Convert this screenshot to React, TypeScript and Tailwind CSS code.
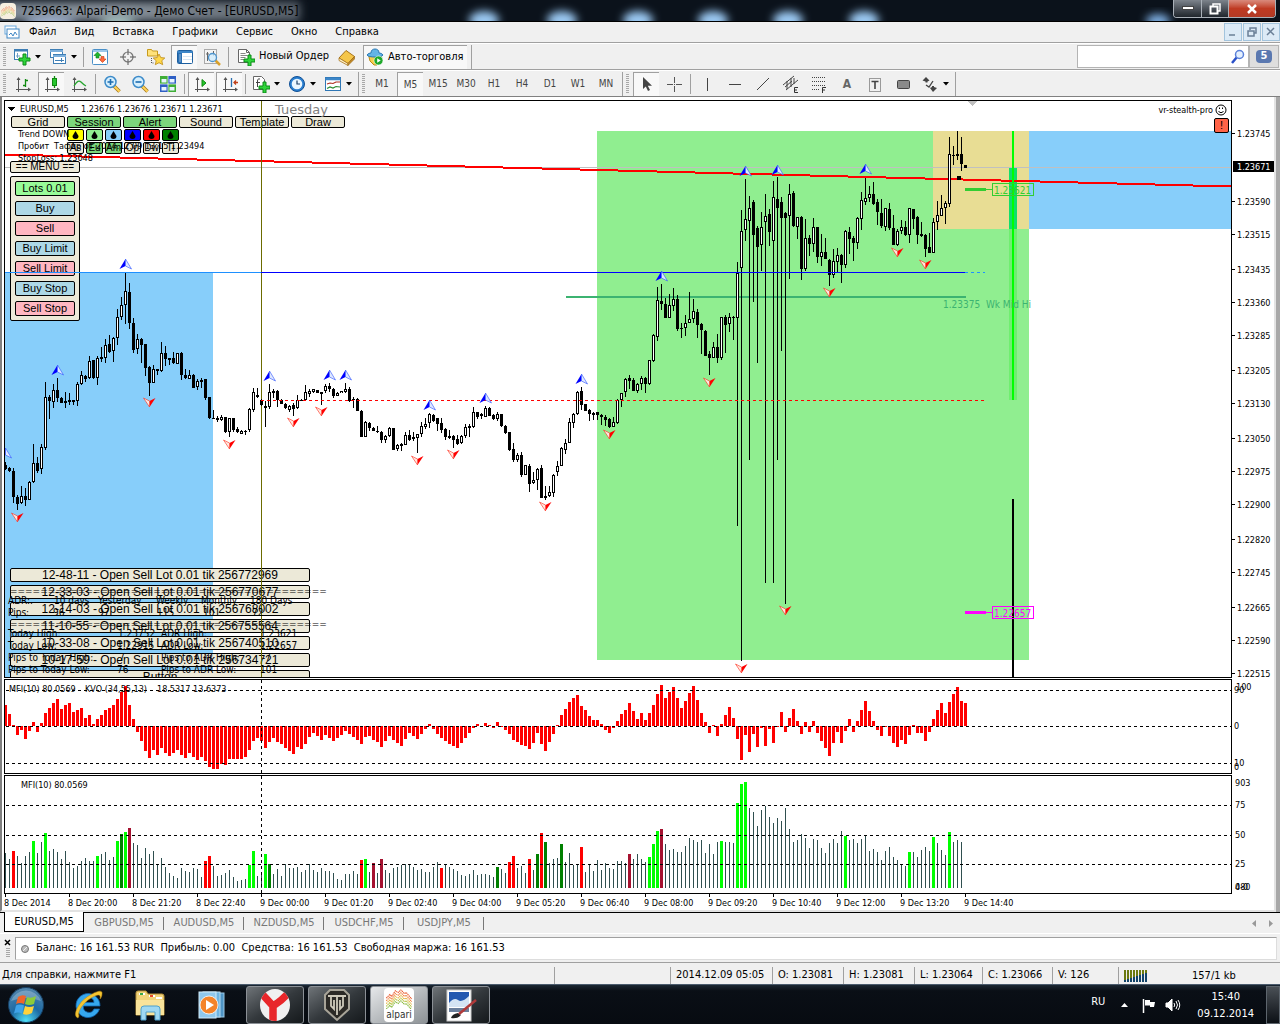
import type { ReactNode } from "react";
import { clsx } from "clsx";

const STEP = 4;
const ORIGIN = 5;
const barX = (i: number) => ORIGIN + i * STEP;

// high, body top, body bottom, low, w = hollow / b = filled
const CANDLES = `462,465,469,470,b 467,468,471,472,b 468,471,497,503,b 495,497,504,510,b 486,496,503,504,w 488,496,500,506,b
481,482,500,500,w 444,463,482,483,w 457,463,471,473,b 444,447,469,474,w 382,397,448,450,w 395,397,401,419,b
384,390,402,408,w 378,390,398,402,b 397,398,403,403,b 392,401,403,408,b 393,400,402,405,b 400,400,402,405,b
382,384,401,406,w 371,375,384,385,w 375,376,379,382,b 356,361,378,379,w 360,360,378,379,b 356,358,378,385,w
347,357,359,362,b 339,345,358,363,w 335,344,352,353,b 337,338,351,362,w 309,317,338,345,w 297,305,317,320,w
273,291,305,324,w 283,292,323,329,b 318,323,350,353,b 334,339,349,354,w 338,339,345,363,b 344,344,368,376,b
366,367,383,396,b 365,369,383,383,w 369,369,371,375,b 342,353,371,372,w 346,353,359,366,b 358,358,360,365,b
352,358,363,364,b 353,353,364,364,w 352,353,375,380,b 369,375,378,379,b 370,375,379,379,w 374,375,388,388,b
379,381,387,390,w 378,380,382,388,b 379,379,398,400,b 397,397,418,419,b 410,418,419,419,b 416,418,420,422,b
415,417,420,421,w 417,417,432,433,b 418,418,432,437,w 418,418,430,432,b 427,429,432,433,b 430,431,434,434,w
430,431,432,435,b 408,409,430,432,w 388,392,410,412,w 388,395,397,398,b 399,400,405,406,b 401,406,408,427,b
384,392,407,409,w 389,391,393,398,b 390,391,400,407,b 399,400,404,404,b 403,404,408,409,b 405,406,410,412,w
403,405,409,416,b 395,400,408,409,w 399,400,401,401,b 385,392,400,401,w 389,391,394,397,w 389,389,392,393,w
390,390,393,393,b 392,392,394,405,b 384,386,391,393,w 383,386,389,392,b 388,389,396,398,b 392,393,396,396,w
391,391,393,393,w 383,389,392,393,w 387,389,401,402,b 397,399,400,408,b 398,399,411,411,b 410,411,437,437,b
421,422,437,437,w 422,423,428,431,b 427,428,431,431,b 426,431,432,433,b 431,432,440,443,b 435,436,440,443,w
427,428,436,437,w 428,428,450,450,b 444,445,449,451,w 443,444,446,451,b 432,435,445,445,w 430,435,440,441,b
432,437,439,441,b 434,434,438,453,w 422,426,434,437,w 418,424,427,429,w 413,414,423,428,w 414,415,421,422,b
418,418,424,431,b 418,423,430,433,b 428,429,437,440,b 430,436,438,439,b 435,436,440,448,b 435,439,444,445,b
435,436,443,444,w 424,427,436,438,w 424,426,428,437,b 407,412,427,428,w 412,412,417,419,b 413,414,416,419,b
406,408,417,417,w 407,408,416,416,b 414,415,419,420,b 412,414,419,421,w 414,414,426,427,b 425,426,433,434,b
432,432,450,451,b 443,449,460,462,b 453,455,460,462,w 452,455,475,477,b 465,465,475,475,w 464,466,484,492,b
472,480,483,484,w 468,469,480,490,w 465,468,498,498,b 486,496,498,500,b 486,492,496,497,w 474,475,493,497,w
461,466,472,476,w 447,448,466,466,w 439,443,450,454,w 418,422,443,443,w 413,414,423,428,w 391,392,414,415,w
387,391,405,410,b 404,404,411,411,b 409,410,414,421,b 412,413,415,420,b 412,412,415,420,b 414,415,417,425,b
415,417,420,426,b 418,419,427,428,b 417,422,427,427,w 399,400,423,424,w 393,393,400,407,w 378,379,392,397,w
375,378,381,389,b 378,380,391,391,b 383,384,391,393,w 376,378,384,390,w 377,378,384,393,b 360,360,384,385,w
334,335,361,362,w 287,300,337,341,w 284,301,304,310,b 298,304,318,318,b 294,305,318,318,w 288,299,306,311,w
295,299,329,331,b 323,328,329,338,b 315,323,328,336,w 292,319,323,323,w 299,311,319,323,w 309,312,325,338,b
323,324,330,354,b 330,331,356,356,b 351,354,358,375,b 342,347,358,358,w 334,347,358,363,b 317,317,358,360,w
315,317,325,353,b 313,317,324,332,w 316,317,318,340,b 262,273,318,526,w 210,231,268,661,w 179,219,230,241,w
196,208,221,460,w 200,202,235,302,b 226,228,247,363,b 212,227,245,271,w 194,216,222,583,w 209,214,232,246,b
181,197,241,583,w 177,199,208,460,b 197,202,218,351,b 212,213,218,604,b 184,194,216,279,w 191,193,226,227,b
217,217,227,239,w 216,217,269,280,b 219,238,269,271,w 235,238,244,256,b 218,227,244,252,w 227,227,257,263,b
234,252,257,266,w 238,252,259,259,b 259,260,275,286,b 249,261,275,278,w 248,255,262,272,w 254,255,265,283,b
230,231,265,268,w 227,232,239,254,b 236,238,243,261,b 217,218,243,249,w 192,200,219,230,w 178,198,202,205,w
186,194,198,202,w 182,194,204,205,b 199,202,212,225,b 199,213,226,228,b 208,208,227,231,w 203,209,228,230,b
215,228,245,245,b 229,231,245,246,w 220,227,231,234,w 221,227,235,236,b 208,208,235,243,w 209,209,219,229,b
216,217,235,244,b 222,234,236,237,b 234,235,249,257,b 233,247,253,253,b 218,222,253,253,w 201,215,222,230,w
195,208,216,216,w 201,203,208,224,w 137,154,204,207,w 146,155,156,165,b 131,154,156,160,b 137,154,164,171,b`
  .split(/\s+/)
  .map((row) => {
    const [high, top, bottom, low, kind] = row.split(",");
    return { high: +high, top: +top, bottom: +bottom, low: +low, hollow: kind === "w" };
  });

const KVO = [
  21, 12, 1, -9, -4, -13, -5, 4, -6, 3, 13, 18, 23, 27, 17, 21, 23, 14, 16, 18, 8, 11, 2, 7, 11, 16, 18, 21, 27, 34,
  40, 21, 7, -6, -15, -25, -32, -24, -29, -22, -27, -30, -27, -24, -29, -32, -27, -31, -34, -31, -35, -41, -43, -43,
  -38, -39, -33, -33, -33, -33, -31, -24, -15, -12, -15, -22, -16, -12, -16, -18, -22, -25, -28, -21, -23, -18, -11,
  -7, -10, -14, -9, -12, -15, -12, -9, -5, -8, -11, -14, -18, -11, -10, -14, -16, -21, -15, -10, -14, -17, -20, -13,
  -7, -10, -13, -8, -3, 2, -3, -8, -12, -15, -18, -20, -22, -17, -12, -7, -2, 2, 0, 3, 1, -2, 4, -1, -4, -8, -14, -16,
  -19, -20, -23, -17, -7, -18, -25, -16, -8, 1, 11, 17, 24, 28, 31, 20, 16, 10, 6, 6, 2, -4, -7, -2, 5, 12, 16, 23, 15,
  7, 13, 6, 13, 21, 32, 41, 28, 34, 39, 28, 18, 25, 33, 40, 26, 13, 4, -7, 1, -10, 2, 11, 19, 8, -13, -34, -9, -26, -8,
  -21, -2, -20, -3, -17, -1, 14, -6, 8, 17, 5, -8, 4, -6, 5, -7, -15, -22, -30, -17, -6, -17, -5, 7, -6, 5, 16, 25, 15,
  5, -4, -10, -1, -10, -17, -21, -14, -18, -9, 1, -7, -7, -15, -6, 7, 16, 23, 13, 24, 32, 39, 25, 23,
];

const MFI = `35 29 37r 32 25 32 36 47g 35 46 55g 37 39 36 29 37 26 20 22 27 30 27 27 32g 34 36 28 31 47g 54d 56g 60m 45
43 30 40 34 37 23 30 21 15 12 10 20 17 16 20 19 11 27r 32r 22 12 13 15 18 11 7 8 9 23g 37g 12 16 34g 24d 14 19 12 24 20
20 21 16 18 24 18 16 20 17 17 15 9 8 14 14 17 14 28r 29g 16 25m 15 29m 18 15 20 21 23 24 23 21 18 19 16 16 21 26 20r 23
21 19 17 13 12 14 18 13 14 14 13 11 21d 19 15 26r 32r 20 22 15 29r 18 34d 55r 46d 25 29 30 44d 26 35 23 24 41r 16 23 17
28 18 25 20 19 27 27 25 34m 29 34 29 26 31g 44g 57g 59m 44 38 39 36 36 42 50 48 46 48 35 44 34 46 47g 46 46 45 85g 104g
106g 80 76 62 78 82 71 65 70 67 80 59 46 48 54 50 40 49 48 40 35 45 49 45 57 52g 48 49 45 49 53 37 39 36 28 37 41 31 28
23 22 36g 36 31 38 41 37 51g 45 38 33 56g 46 48 46`.split(/\s+/);

const MFI_COLORS: Record<string, string> = { g: "#00ff00", d: "#008000", r: "#ff0000", m: "#a51230" };

const UP_FRACTALS = [
  [5, 453], [57, 370], [125, 264], [269, 376], [329, 375], [345, 375], [429, 405], [485, 398],
  [581, 379], [661, 276], [745, 171], [777, 170], [865, 169],
];
const DOWN_FRACTALS = [
  [17, 517], [149, 402], [229, 444], [293, 422], [321, 411], [417, 460], [453, 454], [545, 506],
  [609, 434], [709, 382], [829, 292], [897, 252], [925, 264], [741, 668], [785, 610],
];

const PRICES: [string, number][] = [
  ["1.23745", 134], ["1.23590", 202], ["1.23515", 235], ["1.23435", 270], ["1.23360", 303], ["1.23285", 336],
  ["1.23205", 371], ["1.23130", 404], ["1.23050", 439], ["1.22975", 472], ["1.22900", 505], ["1.22820", 540],
  ["1.22745", 573], ["1.22665", 608], ["1.22590", 641], ["1.22515", 674],
];

const TIMES = [
  "8 Dec 2014", "8 Dec 20:00", "8 Dec 21:20", "8 Dec 22:40", "9 Dec 00:00", "9 Dec 01:20", "9 Dec 02:40", "9 Dec 04:00",
  "9 Dec 05:20", "9 Dec 06:40", "9 Dec 08:00", "9 Dec 09:20", "9 Dec 10:40", "9 Dec 12:00", "9 Dec 13:20", "9 Dec 14:40",
];

const INFO_LABELS: [number, number, string][] = [
  [8, 604, "ADR:."], [54, 604, "10 days"], [98, 604, "Yesterday"], [156, 604, "Weekly"], [201, 604, "Monthly"], [250, 604, "180 Days"],
  [8, 616, "Pips:"], [53, 616, "96"], [98, 616, "97"], [157, 616, "115"], [203, 616, "101"], [252, 616, "72"],
  [8, 637, "Today High:"], [118, 637, "1.23752"], [161, 637, "ADR High:"], [260, 637, "1.23621"],
  [8, 649, "Today Low:"], [117, 649, "1.22915"], [161, 649, "ADR Low:"], [260, 649, "1.22657"],
  [8, 661, "Pips to Today High:"], [119, 661, "7"], [161, 661, "Pips to ADR High:"], [262, 661, "-7"],
  [8, 673, "Pips to Today Low:"], [117, 673, "76"], [161, 673, "Pips to ADR Low:"], [260, 673, "101"],
];

const TRADE_LOG = [
  "12-48-11 - Open Sell Lot 0.01 tik 256772969",
  "12-33-03 - Open Sell Lot 0.01 tik 256770677",
  "12-14-03 - Open Sell Lot 0.01 tik 256768002",
  "11-10-55 - Open Sell Lot 0.01 tik 256755564",
  "10-33-08 - Open Sell Lot 0.01 tik 256740510",
  "10-17-59 - Open Sell Lot 0.01 tik 256734721",
  "Button",
];

/* ---------- icons ---------- */

function Icon({ size = 18, children }: { size?: number; children: ReactNode }) {
  return (
    <svg width={size} height={size} viewBox="0 0 18 18" fill="none" aria-hidden="true">
      {children}
    </svg>
  );
}

const Plus = ({ x = 7, y = 7 }: { x?: number; y?: number }) => (
  <path
    d={`M${x + 4} ${y}h3v4h4v3h-4v4h-3v-4h-4v-3h4z`}
    fill="#2fd43a"
    stroke="#0b8a16"
    strokeWidth="1"
  />
);

const Caret = () => (
  <svg width="6" height="4" viewBox="0 0 6 4" aria-hidden="true">
    <path d="M0 0h6L3 3.5z" fill="#000" />
  </svg>
);

const NewChartIcon = () => (
  <Icon>
    <rect x="1.5" y="1.5" width="13" height="10" fill="#fff" stroke="#3f7fb5" />
    <path d="M1 2.5h14" stroke="#3f7fb5" strokeWidth="2" />
    <path d="M4.500 5v5M3 8h4" stroke="#6f9fc4" />
    <Plus x={6} y={6} />
  </Icon>
);

const ProfilesIcon = () => (
  <Icon>
    <rect x="1.500" y="1.500" width="12" height="8" fill="#fff" stroke="#3f7fb5" />
    <path d="M1 3h13" stroke="#7db0dc" strokeWidth="2" />
    <rect x="4.500" y="6.500" width="12" height="9" fill="#fff" stroke="#3f7fb5" />
    <path d="M4 8h13" stroke="#7db0dc" strokeWidth="2" />
    <path d="M6 12.500h9M12.500 10v4" stroke="#3f7fb5" />
  </Icon>
);

const MarketWatchIcon = () => (
  <Icon>
    <rect x="1.500" y="1.500" width="15" height="15" rx="1" fill="#fff" stroke="#4a90c8" />
    <path d="M2 3h14" stroke="#9cc8ea" strokeWidth="2" />
    <path d="M6.500 4l3.500 3.500H8V10H5V7.500H3z" fill="#1fb82c" stroke="#0d7a17" strokeWidth=".6" />
    <path d="M11.500 14.500L15 11h-2V8.500h-3V11H8z" fill="#ff6a3c" stroke="#c23a12" strokeWidth=".6" />
  </Icon>
);

const TargetIcon = () => (
  <Icon>
    <circle cx="9" cy="9" r="5" stroke="#777" strokeWidth="1.200" />
    <path d="M9 1v6M9 11v6M1 9h6M11 9h6" stroke="#555" />
  </Icon>
);

const FavoritesIcon = () => (
  <Icon>
    <path d="M0.500 1.500h4l1 1.500h5v5h-10z" fill="#ffe27a" stroke="#c79a1c" />
    <path d="M4.500 10v5h3" stroke="#555" strokeDasharray="1 1" />
    <path d="M12 6l1.800 3.600 4 .4-3 2.700.9 4L12 14.700 8.300 16.700l.9-4-3-2.700 4-.4z" fill="#ffd84a" stroke="#bd8a14" strokeWidth=".8" />
  </Icon>
);

const TerminalIcon = () => (
  <Icon>
    <rect x="1.500" y="2.500" width="15" height="13" rx="1" fill="#fff" stroke="#1d5f9f" />
    <path d="M1.500 4h15" stroke="#3c86c8" strokeWidth="2" />
    <rect x="2" y="5" width="4" height="10" fill="#2a70b4" />
    <path d="M3.500 7h1M3.500 9h1M3.500 11h1M3.500 13h1" stroke="#fff" />
    <path d="M7 8.500h9M7 11.500h9" stroke="#d7e6f3" />
  </Icon>
);

const TesterIcon = () => (
  <Icon>
    <rect x="1.500" y="1.500" width="12" height="14" fill="#f4f4f4" stroke="#aaa" />
    <path d="M4.500 4v9M3 6h3M10.500 3v5" stroke="#666" />
    <path d="M12.500 12.500l4.500 4.500" stroke="#d9a12c" strokeWidth="2.500" />
    <circle cx="9.500" cy="9.500" r="4" fill="#d4ecfb" fillOpacity=".85" stroke="#4d93cc" strokeWidth="1.300" />
  </Icon>
);

const NewOrderIcon = () => (
  <Icon>
    <path d="M1.500 1.500h8l3 3v10h-11z" fill="#fff" stroke="#666" />
    <path d="M3.500 5.500h5M3.500 7.500h7M3.500 9.500h5M3.500 11.500h4" stroke="#888" />
    <path d="M9.500 1.500v3h3" stroke="#666" />
    <Plus x={7} y={7} />
  </Icon>
);

const BookIcon = () => (
  <Icon>
    <path d="M1 10L8 2.500l8.500 6-6.500 7z" fill="#f5c64a" stroke="#a8741a" />
    <path d="M1 10v2.500l9 5v-2z" fill="#fff3c9" stroke="#a8741a" strokeWidth=".8" />
    <path d="M10 15.500v2l6.500-6.500V8.500z" fill="#c98e24" stroke="#8f5f12" strokeWidth=".6" />
  </Icon>
);

const ExpertIcon = () => (
  <Icon>
    <path d="M2.500 7l1.500 6 4 4h3l4-5v-5z" fill="#f7cf4c" stroke="#b98a18" />
    <path d="M1 7c1-1.500 3-2 4-2 0-3 2-4 4-4s4 1 4 4c1 0 3 .5 4 2-1 1.500-4 2-8 2S2 8.500 1 7z" fill="#63b4e6" stroke="#2a78b4" />
    <circle cx="12.500" cy="12.500" r="4.500" fill="#1ea82a" stroke="#fff" strokeWidth=".6" />
    <path d="M11.200 10.200v4.600l3.500-2.300z" fill="#fff" />
  </Icon>
);

const Axes = () => (
  <g>
    <path d="M4.500 3v14M2 14.500h14" stroke="#555" />
    <path d="M4.500 2l-2 3h4zM17 14.500l-3-2v4z" fill="#555" />
  </g>
);

const BarsIcon = () => (
  <Icon>
    <Axes />
    <path d="M11.500 4v8M9 10.500h2.500M11.500 5.500H14" stroke="#108a10" strokeWidth="1.300" />
  </Icon>
);

const CandlesIcon = () => (
  <Icon>
    <Axes />
    <path d="M11.500 1v12" stroke="#108a10" strokeWidth="1.300" />
    <rect x="9.500" y="3.500" width="4" height="7" fill="#27c62f" stroke="#108a10" />
  </Icon>
);

const LineIcon = () => (
  <Icon>
    <Axes />
    <path d="M4 11c3-5 5-6 7-4s3 3 5 4" stroke="#27a52f" strokeWidth="1.300" />
  </Icon>
);

const ZoomIcon = ({ plus }: { plus?: boolean }) => (
  <Icon>
    <path d="M11 11l5.500 5.500" stroke="#a8781a" strokeWidth="3.500" />
    <path d="M11 11l5.500 5.500" stroke="#ffd457" strokeWidth="2" />
    <circle cx="7.500" cy="7" r="5.500" fill="#d6effd" stroke="#3d8bc9" strokeWidth="1.500" />
    <path d={plus ? "M7.500 4v6M4.500 7h6" : "M4.500 7h6"} stroke="#1d6cb0" strokeWidth="1.600" />
  </Icon>
);

const TileIcon = () => (
  <Icon>
    <rect x="1" y="1" width="8" height="8" fill="#3fae36" />
    <rect x="9" y="1" width="8" height="8" fill="#2f5fc4" />
    <rect x="1" y="9" width="8" height="8" fill="#2f5fc4" />
    <rect x="9" y="9" width="8" height="8" fill="#3fae36" />
    <path d="M2.500 4h5v3.500h-5zM10.500 4h5v3.500h-5zM2.500 12h5v3.500h-5zM10.500 12h5v3.500h-5z" fill="#e8f4ff" />
    <path d="M1 9h16M9 1v16" stroke="#fff" strokeWidth=".7" />
  </Icon>
);

const ScrollIcon = () => (
  <Icon>
    <Axes />
    <path d="M9 4.500v7l4-3.500z" fill="#27c62f" stroke="#108a10" />
  </Icon>
);

const ShiftIcon = () => (
  <Icon>
    <Axes />
    <path d="M10.500 3v9" stroke="#2b6fae" strokeWidth="1.300" />
    <path d="M17 7.500h-4M15 5.500L13 7.500l2 2" stroke="#c0401a" strokeWidth="1.300" />
  </Icon>
);

const IndicatorsIcon = () => (
  <Icon>
    <path d="M1.500 1.500h8l3 3v10h-11z" fill="#fff" stroke="#666" />
    <path d="M8 4c-2-.5-2.500.5-2.500 2v6M4 7.500h4" stroke="#444" />
    <Plus x={7} y={7} />
  </Icon>
);

const ClockIcon = () => (
  <Icon>
    <circle cx="9" cy="9" r="7.500" fill="#2a7fd0" stroke="#0f4f95" />
    <circle cx="9" cy="9" r="5.300" fill="#e9f6ff" />
    <path d="M9 5.500V9h3" stroke="#1c3f66" strokeWidth="1.200" />
  </Icon>
);

const TemplateIcon = () => (
  <Icon>
    <rect x="1.500" y="2.500" width="15" height="13" fill="#fff" stroke="#2f77b5" />
    <path d="M1.500 4h15" stroke="#3c86c8" strokeWidth="2.500" />
    <path d="M3 9l3-1 3 .5 3-1.500h4" stroke="#b03020" strokeWidth="1.200" />
    <path d="M3 13.500l3-1.500 3 1 3-1.500 4 .5" stroke="#2c8b30" strokeWidth="1.200" />
  </Icon>
);

const CursorIcon = () => (
  <Icon>
    <path d="M5 2v12l2.800-2.600L10 16l2-1-2.200-4.300H14z" fill="#444" />
  </Icon>
);

const CrossIcon = () => (
  <Icon>
    <path d="M9.500 2v6M9.500 11v6M2 9.500h6M11 9.500h6" stroke="#555" />
    <rect x="9" y="9" width="1" height="1" fill="#555" />
  </Icon>
);

const VLineIcon = () => <Icon><path d="M9.500 3v13" stroke="#444" /></Icon>;
const HLineIcon = () => <Icon><path d="M3 9.500h12" stroke="#444" /></Icon>;
const TrendIcon = () => <Icon><path d="M3 15L15 3" stroke="#444" /></Icon>;

const ChannelIcon = () => (
  <Icon>
    <path d="M1 10L12 1M4 15L16 5M3 12l7-6M5 6v8M9 3v9M12 3v6" stroke="#444" />
    <path d="M16 12.500h-3.500v5H16M12.500 15H15" stroke="#333" />
  </Icon>
);

const FiboIcon = () => (
  <Icon>
    <path d="M2 2.500h13M2 6.500h13M2 10.500h13M2 14.500h8" stroke="#444" strokeDasharray="1 1" />
    <path d="M16 12.500h-3.500v5.500M12.500 15H15" stroke="#333" />
  </Icon>
);

const LabelIcon = () => (
  <Icon>
    <rect x="3.500" y="3.500" width="11" height="13" stroke="#444" strokeDasharray="1 1" />
    <path d="M5.500 6.500h7M9 6.500V14" stroke="#444" strokeWidth="1.600" />
  </Icon>
);

const RectIcon = () => (
  <Icon>
    <rect x="3.500" y="5.500" width="12" height="8" rx="1" fill="#8a8a8a" stroke="#444" />
  </Icon>
);

const ArrowsIcon = () => (
  <Icon>
    <path d="M5 2L1.500 5.500l3 1v1h2v-1l2-1zM12 17l4-4-3-1v-1h-2v1l-2 1z" fill="#444" />
    <path d="M5 10l3 2 4-6" stroke="#444" strokeWidth="1.300" />
  </Icon>
);

const AlpariMark = ({ className }: { className?: string }) => (
  <svg className={className} viewBox="0 0 30 22" fill="none" aria-hidden="true">
    {["#e8562a", "#ef7c3c", "#e6b03c", "#b3bf3a", "#86b83c"].map((color, i) => (
      <path
        key={color}
        d={`M1 ${10 + i * 3}l4-4 2 2 4-6 3 2 3-3 4 4 2-1 6 7`}
        stroke={color}
        strokeWidth="1.200"
        strokeDasharray="1.500 .6"
      />
    ))}
  </svg>
);

/* ---------- window chrome ---------- */

function TitleBar() {
  return (
    <header className="relative flex h-[22px] items-start overflow-hidden border-b border-black bg-[#0b121b]">
      <svg className="absolute inset-0 h-full w-full" aria-hidden="true">
        <defs>
          <filter id="soft" x="-50%" y="-50%" width="200%" height="200%">
            <feGaussianBlur stdDeviation="4" />
          </filter>
          <linearGradient id="glow" x1="0" x2="1" y1="0" y2="0">
            <stop offset="0" stopColor="#7c8794" />
            <stop offset=".4" stopColor="#8a939c" />
            <stop offset="1" stopColor="#59626c" />
          </linearGradient>
        </defs>
        <rect x="-10" y="2" width="310" height="19" fill="url(#glow)" filter="url(#soft)" />
        <ellipse cx="50" cy="22" rx="26" ry="5" fill="#b4c8ea" filter="url(#soft)" />
        <ellipse cx="118" cy="22" rx="18" ry="5" fill="#b8d8d4" filter="url(#soft)" />
        {[484, 562, 638, 713, 788, 864].map((cx) => (
          <ellipse key={cx} cx={cx} cy="20" rx="15" ry="9" fill="#9ccaf4" filter="url(#soft)" />
        ))}
        <ellipse cx="1158" cy="21" rx="12" ry="7" fill="#7fb0e4" filter="url(#soft)" />
      </svg>
      <span className="relative mt-[3px] flex h-4 w-4 items-center justify-center rounded-sm bg-[#f6efe0]">
        <AlpariMark className="h-3 w-[14px]" />
      </span>
      <h1 className="relative ml-[5px] flex-1 text-[12px] leading-[22px] whitespace-nowrap text-black">
        7259663: Alpari-Demo - Демо Счет - [EURUSD,M5]
      </h1>
      <div className="relative mr-1 flex h-[18px] overflow-hidden rounded-b border border-t-0 border-[#a9b0b8]">
        <button aria-label="Minimize" className="flex w-7 items-center justify-center border-r border-[#a9b0b8] bg-linear-to-b from-[#7d848c] to-[#20262d]">
          <svg width="12" height="5" aria-hidden="true"><rect x=".5" y=".5" width="11" height="3" fill="#fff" stroke="#444" /></svg>
        </button>
        <button aria-label="Restore" className="flex w-[27px] items-center justify-center border-r border-[#a9b0b8] bg-linear-to-b from-[#7d848c] to-[#20262d]">
          <svg width="12" height="12" fill="none" aria-hidden="true">
            <path d="M4 3V1h7v7H9" stroke="#fff" strokeWidth="1.500" />
            <rect x="1.500" y="3.500" width="7" height="7" stroke="#fff" strokeWidth="2" />
          </svg>
        </button>
        <button aria-label="Close" className="flex w-[46px] items-center justify-center bg-linear-to-b from-[#d98a7c] via-[#bf3a22] to-[#b23a25]">
          <svg width="12" height="10" aria-hidden="true"><path d="M2 1l8 8M10 1L2 9" stroke="#fff" strokeWidth="2.500" /></svg>
        </button>
      </div>
    </header>
  );
}

function MdiButton({ label, path }: { label: string; path: string }) {
  return (
    <button aria-label={label} className="flex h-[18px] w-[18px] items-center justify-center border border-[#a3c4dd] bg-[#dceaf6]">
      <svg width="10" height="10" fill="none" aria-hidden="true"><path d={path} stroke="#6a7f96" strokeWidth="1.500" /></svg>
    </button>
  );
}

function MenuBar() {
  const items = ["Файл", "Вид", "Вставка", "Графики", "Сервис", "Окно", "Справка"];
  return (
    <nav className="flex h-[21px] items-center border-b border-[#a0a0a0] pl-1 text-[11px]">
      <svg width="16" height="16" fill="none" aria-hidden="true">
        <rect x="1" y="2" width="11" height="8" fill="#fff" stroke="#6aa8dc" />
        <rect x="3" y="5" width="12" height="9" fill="#fff" stroke="#3f86c4" />
        <path d="M5 11l2-2 2 3 2-4 2 3" stroke="#3f86c4" />
      </svg>
      <ul className="ml-[9px] flex flex-1 gap-[18px]">
        {items.map((item) => (
          <li key={item}>
            <a href="#" className="whitespace-nowrap">{item}</a>
          </li>
        ))}
      </ul>
      <div className="flex gap-px">
        <MdiButton label="Minimize chart" path="M1 8h6" />
        <MdiButton label="Restore chart" path="M3 3V1h6v5H7M1 4h6v5H1z" />
        <MdiButton label="Close chart" path="M1 1l7 7M8 1L1 8" />
      </div>
    </nav>
  );
}

const Grip = () => <span className="mx-[3px] h-5 w-[3px] bg-[repeating-linear-gradient(#a8a8a8_0_1px,transparent_1px_2px)]" />;
const Divider = () => <span className="mx-[2px] h-5 w-px bg-[#a0a0a0]" />;

const PRESSED = "border-t border-l border-[#a0a0a0] bg-[#f8f8f8]";

function Tool({ label, pressed, caret, children }: { label: string; pressed?: boolean; caret?: boolean; children: ReactNode }) {
  return (
    <button
      aria-label={label}
      aria-pressed={pressed}
      className={clsx("flex h-6 items-center justify-center", caret ? "w-9 gap-1" : "mx-px w-[26px]", pressed && PRESSED)}
    >
      {children}
      {caret && <Caret />}
    </button>
  );
}

function Toolbars() {
  return (
    <div>
      <div className="flex h-[27px] items-center border-t border-b border-t-white border-b-[#a0a0a0]">
        <Grip />
        <Tool label="New chart" caret><NewChartIcon /></Tool>
        <Tool label="Profiles" caret><ProfilesIcon /></Tool>
        <Divider />
        <Tool label="Market watch"><MarketWatchIcon /></Tool>
        <Tool label="Data window"><TargetIcon /></Tool>
        <Tool label="Navigator"><FavoritesIcon /></Tool>
        <Tool label="Terminal" pressed><TerminalIcon /></Tool>
        <Tool label="Strategy tester"><TesterIcon /></Tool>
        <Divider />
        <button className="ml-[6px] flex h-6 items-center gap-1 text-[11px] whitespace-nowrap">
          <NewOrderIcon />
          Новый Ордер
        </button>
        <span className="ml-1"><Tool label="MetaEditor"><BookIcon /></Tool></span>
        <button className={clsx("ml-[2px] flex h-6 items-center gap-1 px-[2px] pr-1 text-[11px] whitespace-nowrap", PRESSED)} aria-pressed="true">
          <ExpertIcon />
          Авто-торговля
        </button>
        <span className="mx-1 h-6 w-px bg-[#a0a0a0]" />
        <label className="ml-auto flex h-[23px] w-[172px] items-center border border-[#b4b4b4] bg-white">
          <input aria-label="Search" className="h-full min-w-0 flex-1 px-1 text-[11px] outline-none" />
          <svg width="16" height="16" className="mr-[2px]" fill="none" aria-hidden="true">
            <path d="M2 14l5-6" stroke="#2a50c8" strokeWidth="2.500" />
            <circle cx="9.500" cy="5.500" r="4" fill="#e4f0ff" stroke="#5a80d8" strokeWidth="1.500" />
          </svg>
        </label>
        <button aria-label="Messages: 5" className="mr-px flex h-[23px] w-[30px] items-center justify-center border border-[#b4b4b4] bg-[#dedede]">
          <span className="flex h-[13px] w-4 items-center justify-center rounded-sm bg-[#5a78b0] text-[11px] font-bold text-white">5</span>
        </button>
      </div>
      <div className="flex h-[27px] items-center border-t border-b border-t-white border-b-[#808080]">
        <Grip />
        <Tool label="Bar chart"><BarsIcon /></Tool>
        <Tool label="Candlesticks" pressed><CandlesIcon /></Tool>
        <Tool label="Line chart"><LineIcon /></Tool>
        <Divider />
        <Tool label="Zoom in"><ZoomIcon plus /></Tool>
        <Tool label="Zoom out"><ZoomIcon /></Tool>
        <Tool label="Tile windows"><TileIcon /></Tool>
        <Divider />
        <Tool label="Auto scroll" pressed><ScrollIcon /></Tool>
        <Tool label="Chart shift" pressed><ShiftIcon /></Tool>
        <Divider />
        <Tool label="Indicators" caret><IndicatorsIcon /></Tool>
        <Tool label="Periods" caret><ClockIcon /></Tool>
        <Tool label="Templates" caret><TemplateIcon /></Tool>
        <span className="ml-[2px] h-6 w-px bg-[#a0a0a0]" />
        <Grip />
        {["M1", "M5", "M15", "M30", "H1", "H4", "D1", "W1", "MN"].map((period) => (
          <Tool key={period} label={period} pressed={period === "M5"}>
            <span className="text-[10px] text-[#444]">{period}</span>
          </Tool>
        ))}
        <span className="ml-[2px] h-6 w-px bg-[#a0a0a0]" />
        <Grip />
        <Tool label="Cursor" pressed><CursorIcon /></Tool>
        <Tool label="Crosshair"><CrossIcon /></Tool>
        <Divider />
        <Tool label="Vertical line"><VLineIcon /></Tool>
        <Tool label="Horizontal line"><HLineIcon /></Tool>
        <Tool label="Trendline"><TrendIcon /></Tool>
        <Tool label="Channel"><ChannelIcon /></Tool>
        <Tool label="Fibonacci"><FiboIcon /></Tool>
        <Tool label="Text"><span className="text-[12px] font-bold text-[#666]">A</span></Tool>
        <Tool label="Text label"><LabelIcon /></Tool>
        <Tool label="Rectangle"><RectIcon /></Tool>
        <Tool label="Arrows" caret><ArrowsIcon /></Tool>
        <span className="ml-[2px] h-6 w-px bg-[#a0a0a0]" />
      </div>
    </div>
  );
}

/* ---------- chart ---------- */

// every pane draws in window coordinates, shifted to its own corner
function Plot({ top, children }: { top: number; children: ReactNode }) {
  return (
    <svg className="pointer-events-none absolute inset-0 h-full w-full" shapeRendering="crispEdges">
      <g transform={`translate(-5 ${-top})`}>{children}</g>
    </svg>
  );
}

function Pane({ children, axis, className }: { children: ReactNode; axis: ReactNode; className: string }) {
  return (
    <div className={clsx("flex", className)}>
      <div className="relative min-w-0 flex-1 overflow-hidden border border-black">{children}</div>
      <svg className="h-full w-[42px] shrink-0" shapeRendering="crispEdges">{axis}</svg>
    </div>
  );
}

const UpFractal = ({ x, y }: { x: number; y: number }) => (
  <g shapeRendering="auto">
    <path d={`M${x + 0.5} ${y - 5}l-6 10 6-3z`} fill="#00f" />
    <path d={`M${x + 0.5} ${y - 5}l6 10-6-3z`} fill="#dfe8ff" stroke="#2a50ff" strokeWidth=".6" />
  </g>
);

const DownFractal = ({ x, y }: { x: number; y: number }) => (
  <g shapeRendering="auto">
    <path d={`M${x + 0.5} ${y + 5}l6-9-6 3z`} fill="#f00" />
    <path d={`M${x + 0.5} ${y + 5}l-6-9 6 3z`} fill="#ffe8e0" stroke="#ff2a1a" strokeWidth=".6" />
  </g>
);

const RAISED = "flex items-center justify-center overflow-hidden rounded-[2px] border border-black whitespace-nowrap";

function ChartPanels() {
  const tabs = ["Grid", "Session", "Alert", "Sound", "Template", "Draw"];
  const swatches = ["bg-[#ffff00]", "bg-[#90ee90]", "bg-[#87cefa]", "bg-[#0000ff]", "bg-[#ff0000]", "bg-[#008000]"];
  const sessions = ["As", "Eu", "Am", "Op", "Dw", "Ti"];
  const orders = [
    ["Lots 0.01", "bg-[#98fb98]"],
    ["Buy", "bg-[#add8e6]"],
    ["Sell", "bg-[#ffb6c1]"],
    ["Buy Limit", "bg-[#add8e6]"],
    ["Sell Limit", "bg-[#ffb6c1]"],
    ["Buy Stop", "bg-[#add8e6]"],
    ["Sell Stop", "bg-[#ffb6c1]"],
  ];
  return (
    <div className="font-['Liberation_Sans',sans-serif] text-black">
      <div className="absolute top-[15px] left-[6px] flex gap-[2px] text-[11px] leading-none">
        {tabs.map((tab) => (
          <button
            key={tab}
            className={clsx(RAISED, "h-3 w-[54px]", tab === "Session" || tab === "Alert" ? "bg-[#7cd67c]" : "bg-[#ece9d8]")}
          >
            {tab}
          </button>
        ))}
      </div>
      <div className="absolute top-[28px] left-[62px] grid grid-cols-6 gap-x-[2px] gap-y-px text-[10px] leading-none">
        {swatches.map((color) => (
          <button key={color} aria-label="Zone colour" className={clsx(RAISED, "h-3 w-[17px]", color)}>
            <svg width="7" height="9" aria-hidden="true"><path d="M3.500 0L6.500 5a3 3 0 1 1-6 0z" /></svg>
          </button>
        ))}
        {sessions.map((name) => (
          <button key={name} className={clsx(RAISED, "h-3 w-[17px]", name === "Eu" || name === "Am" ? "bg-[#7cd67c]" : "bg-[#ece9d8]")}>
            {name}
          </button>
        ))}
      </div>
      <div className="absolute top-[60px] left-[5px] w-[70px] text-[11px] leading-none">
        <button className={clsx(RAISED, "h-3 w-full bg-[#ece9d8] text-[10px]")}>== MENU ==</button>
        <div className="mt-[3px] flex flex-col gap-[5px] rounded-[2px] border border-black bg-[#ece9d8] p-1">
          {orders.map(([name, color]) => (
            <button key={name} className={clsx(RAISED, "h-[15px] w-full", color)}>{name}</button>
          ))}
        </div>
      </div>
      <div className="absolute top-[467px] left-[5px] flex w-[300px] flex-col gap-[3px] text-[12px] leading-none">
        {TRADE_LOG.map((line) => (
          <button key={line} className={clsx(RAISED, "h-[14px] w-full bg-[#ece9d8]")}>{line}</button>
        ))}
      </div>
      <button aria-label="Alerts" className={clsx(RAISED, "absolute top-[17px] right-[2px] h-[15px] w-[15px] bg-[#ff6347] text-[11px] leading-none")}>!</button>
    </div>
  );
}

function PriceTag({ y, color, text }: { y: number; color: string; text: string }) {
  return (
    <g>
      <rect x="965" y={y - 1} width="21" height="3" fill={color} />
      <rect x="986" y={y} width="6" height="1" fill={color} />
      <rect x="992.500" y={y - 5.5} width="41" height="12" fill="none" stroke={color} />
      <text x="994" y={y + 5} fill={color} className="text-[10px]">{text}</text>
    </g>
  );
}

function PricePane() {
  const axis = (
    <g transform="translate(-1232 -100)" className="text-[9px]">
      {PRICES.map(([price, y]) => (
        <g key={price}>
          <rect x="1232" y={y - 1} width="3" height="1" />
          <text x="1237" y={y + 3}>{price}</text>
        </g>
      ))}
      <rect x="1233" y="161" width="41" height="11" />
      <text x="1237" y="170" fill="#fff">1.23671</text>
    </g>
  );
  return (
    <Pane className="h-[578px]" axis={axis}>
      <Plot top={101}>
        <rect x="5" y="272" width="208" height="405" fill="#87cefa" />
        <rect x="597" y="131" width="432" height="529" fill="#90ee90" />
        <rect x="933" y="131" width="96" height="98" fill="#e8dd94" />
        <rect x="1029" y="131" width="100%" height="98" fill="#87cefa" />
        <rect x="1009" y="168" width="8" height="61" fill="#10df6c" />
        <rect x="1009" y="229" width="8" height="171" fill="#70ee70" />
        <rect x="5" y="167" width="100%" height="1" fill="#c0c0c0" />
        <path d="M967 101h11l-5.500 5z" fill="#c0c0c0" />
      </Plot>
      <ChartPanels />
      <Plot top={101}>
        <path d="M5 154.500L1231 186.500" stroke="#f00" strokeWidth="2" />
        <rect x="1012" y="131" width="2" height="269" fill="#0f0" />
        <rect x="1012" y="499" width="2" height="178" />
        <rect x="261" y="101" width="1" height="576" fill="#6b6b00" />
        <rect x="566" y="296" width="400" height="2" fill="#3cb371" />
        {CANDLES.map((c, i) => (
          <g key={i}>
            <rect x={barX(i)} y={c.high} width="1" height={Math.max(1, c.low - c.high)} />
            <rect x={barX(i) - 1} y={c.top} width="3" height={Math.max(1, c.bottom - c.top)} />
            {c.hollow && <rect x={barX(i)} y={c.top + 1} width="1" height={Math.max(1, c.bottom - c.top - 2)} fill="#fff" />}
          </g>
        ))}
        <rect x="964" y="165" width="3" height="3" />
        <rect x="957" y="176" width="4" height="4" />
        <rect x="5" y="272" width="256" height="1" fill="#1e90ff" />
        <rect x="261" y="272" width="704" height="1" fill="#00f" />
        <path d="M965 272.500h20" stroke="#1e90ff" strokeDasharray="3 3" />
        <path d="M261 400.500h724" stroke="#f00" strokeDasharray="3 3" />
        {UP_FRACTALS.map(([x, y]) => <UpFractal key={x} x={x} y={y} />)}
        {DOWN_FRACTALS.map(([x, y]) => <DownFractal key={x} x={x} y={y} />)}
        <PriceTag y={189} color="#32cd32" text="1.23621" />
        <PriceTag y={612} color="#ff00ff" text="1.22657" />
        <text x="943" y="308" fill="#3cb371" className="text-[10px] whitespace-pre">1.23375  Wk Mid Hi</text>
        <text x="275" y="114" fill="#808080" className="font-['DejaVu_Sans',sans-serif] text-[13px]">Tuesday</text>
        <path d="M8 107h7l-3.500 4z" />
        <g className="text-[9px]">
          <text x="20" y="112">EURUSD,M5</text>
          <text x="81" y="112">1.23676 1.23676 1.23671 1.23671</text>
        </g>
        <g className="text-[9px]">
          <text x="18" y="137">Trend DOWN</text>
          <text x="18" y="149">Пробит</text>
          <text x="54" y="149">Тафир от 2014.12.09 13:15 1.23494</text>
          <text x="18" y="161">StopLoss: 1.23648</text>
        </g>
        <g className="text-[10px]">
          {INFO_LABELS.map(([x, y, text]) => <text key={`${x}-${y}`} x={x} y={y}>{text}</text>)}
        </g>
        <g className="font-['DejaVu_Sans',sans-serif] text-[9px]">
          <text x="10" y="594">{"=".repeat(42)}</text>
          <text x="10" y="627">{"=".repeat(42)}</text>
        </g>
      </Plot>
      <div className="absolute top-[3px] right-1 flex items-center gap-[2px] text-[9px] leading-3">
        vr-stealth-pro
        <svg width="12" height="12" fill="none" stroke="#000" aria-hidden="true">
          <circle cx="6" cy="6" r="5" />
          <path d="M3.500 7.500q2.500 2.500 5 0M4.500 3.500v1.500M7.500 3.500v1.500" />
        </svg>
      </div>
    </Pane>
  );
}

function Level({ y }: { y: number }) {
  return <line x1="6" x2="101%" y1={y + 0.5} y2={y + 0.5} stroke="#000" strokeDasharray="3 3" />;
}

function KvoPane() {
  const labels: [string, number, number][] = [["100", 1236, 690], ["90", 1234, 693], ["0", 1234, 729], ["10", 1234, 766], ["0", 1234, 770]];
  const axis = (
    <g transform="translate(-1232 -679)" className="text-[9px]">
      {labels.map(([text, x, y]) => <text key={y} x={x} y={y}>{text}</text>)}
    </g>
  );
  return (
    <Pane className="mt-px h-[95px]" axis={axis}>
      <Plot top={680}>
        {KVO.map((v, i) => (
          <rect key={i} x={barX(i) - 1} y={v > 0 ? 726 - v : 726} width="3" height={Math.abs(v)} fill="#f00" />
        ))}
        <Level y={690} />
        <Level y={726} />
        <Level y={763} />
        <path d="M261.500 680v94" stroke="#000" strokeDasharray="3 3" />
        <text x="9" y="692" className="text-[9px]">MFI(10) 80.0569</text>
        <text x="85" y="692" className="text-[9px]">KVO (34,55,13)</text>
        <text x="157" y="692" className="text-[9px]">18.5317 13.6373</text>
      </Plot>
    </Pane>
  );
}

function MfiPane() {
  const labels: [string, number][] = [["903", 786], ["75", 808], ["50", 838], ["25", 867], ["480", 890]];
  const axis = (
    <g transform="translate(-1232 -775)" className="text-[9px]">
      {labels.map(([text, y]) => <text key={y} x="1235" y={y}>{text}</text>)}
      <text x="1235" y="890">0-0</text>
    </g>
  );
  return (
    <Pane className="mt-px h-[119px]" axis={axis}>
      <Plot top={776}>
        {MFI.map((item, i) => {
          const value = parseInt(item, 10);
          const color = MFI_COLORS[item.slice(-1)];
          return color ? (
            <rect key={i} x={barX(i) - 1} y={888 - value} width="3" height={value} fill={color} />
          ) : (
            <rect key={i} x={barX(i)} y={888 - value} width="1" height={value} fill="#2f4f4f" />
          );
        })}
        <Level y={805} />
        <Level y={835} />
        <Level y={864} />
        <path d="M261.500 776v117" stroke="#000" strokeDasharray="3 3" />
        <text x="21" y="788" className="text-[9px]">MFI(10) 80.0569</text>
      </Plot>
    </Pane>
  );
}

function ChartWindow() {
  return (
    <section className="mr-1 border-r-2 border-b-2 border-l-2 border-l-[#808080] border-r-[#e3e3e3] border-b-[#e3e3e3] bg-white pt-[3px] pl-[2px]">
      <PricePane />
      <KvoPane />
      <MfiPane />
      <ol className="flex h-4 overflow-hidden text-[9px] leading-3">
        {TIMES.map((time) => (
          <li key={time} className="w-16 shrink-0 whitespace-nowrap">
            <span className="ml-px block h-[3px] w-px bg-black" />
            <time className="block">{time}</time>
          </li>
        ))}
      </ol>
    </section>
  );
}

/* ---------- bottom strips ---------- */

function ChartTabs() {
  const tabs = ["GBPUSD,M5", "AUDUSD,M5", "NZDUSD,M5", "USDCHF,M5", "USDJPY,M5"];
  return (
    <div className="flex h-[21px] items-start border-t border-black pl-1 text-[11px] leading-[19px]">
      <button className="-mt-px w-20 border border-t-0 border-black bg-white text-center">EURUSD,M5</button>
      {tabs.map((tab) => (
        <button key={tab} className="relative w-20 text-center text-[#777]">
          {tab}
          <span className="absolute top-1 right-0 h-[13px] w-px bg-[#777]" />
        </button>
      ))}
      <div className="mt-[7px] mr-[7px] ml-auto flex gap-[13px]">
        <svg width="4" height="7" aria-hidden="true"><path d="M4 0v7L0 3.500z" fill="#999" /></svg>
        <svg width="4" height="7" aria-hidden="true"><path d="M0 0v7l4-3.500z" fill="#999" /></svg>
      </div>
    </div>
  );
}

function AccountStrip() {
  return (
    <div className="flex h-[29px] border-t border-white pt-[3px]">
      <div className="flex w-[15px] flex-col items-center gap-[2px] pt-[2px]">
        <button aria-label="Close terminal">
          <svg width="7" height="7" className="block" aria-hidden="true"><path d="M1 1l5 5M6 1L1 6" stroke="#000" strokeWidth="1.500" /></svg>
        </button>
        <span className="h-[9px] w-1 bg-[repeating-linear-gradient(#a8a8a8_0_1px,transparent_1px_2px)]" />
      </div>
      <p className="mr-[3px] flex h-[23px] flex-1 items-center gap-[7px] border border-[#a0a0a0] border-r-[#ddd] border-b-[#ddd] bg-white pl-[5px] text-[11px] whitespace-pre">
        <svg width="8" height="8" aria-hidden="true"><circle cx="4" cy="4" r="3.500" fill="#bbb" stroke="#777" /><path d="M2 6l4-4" stroke="#eee" /></svg>
        {"Баланс: 16 161.53 RUR  Прибыль: 0.00  Средства: 16 161.53  Свободная маржа: 16 161.53"}
      </p>
    </div>
  );
}

function StatusBar() {
  const cells: [string, string][] = [
    ["2014.12.09 05:05", "w-[102px]"],
    ["O: 1.23081", "w-[71px]"],
    ["H: 1.23081", "w-[71px]"],
    ["L: 1.23064", "w-[68px]"],
    ["C: 1.23066", "w-[70px]"],
    ["V: 126", "w-[66px]"],
  ];
  return (
    <footer className="flex h-[22px] items-end border-t border-[#a0a0a0] text-[11px] leading-4 whitespace-nowrap">
      <span className="h-[17px] flex-1 pl-[2px]">Для справки, нажмите F1</span>
      <span className="h-[17px] w-[116px] border-l border-[#a0a0a0]" />
      {cells.map(([text, width]) => (
        <span key={text} className={clsx("h-[17px] border-l border-[#a0a0a0] pl-[5px]", width)}>{text}</span>
      ))}
      <span className="flex h-[17px] w-[162px] items-center gap-11 border-l border-[#a0a0a0] pl-[5px]">
        <svg width="24" height="12" aria-hidden="true">
          {[0, 1, 2, 3, 4, 5, 6, 7].map((i) => (
            <g key={i}>
              <rect x={i * 3} y="0" width="2" height={10 - i} fill="#6b7a10" />
              <rect x={i * 3} y={10 - i} width="2" height={i + 2} fill="#12446a" />
            </g>
          ))}
        </svg>
        157/1 kb
      </span>
    </footer>
  );
}

function TaskButton({ label, active, children }: { label: string; active?: boolean; children: ReactNode }) {
  return (
    <button
      aria-label={label}
      className={clsx(
        "flex h-[38px] w-[58px] items-center justify-center rounded-[3px] border border-[#8b9096]",
        active ? "bg-linear-to-br from-[#e6e8ea] to-[#8d9296]" : "bg-linear-to-br from-[#6f7478] via-[#34393d] to-[#15191c]",
      )}
    >
      {children}
    </button>
  );
}

function Taskbar() {
  return (
    <div className="flex h-10 items-center border-t border-[#4a5a6c] bg-linear-to-b from-[#1b2733] from-0% via-[#0a0f16] via-15% to-[#070b11] text-white">
      <button aria-label="Start" className="ml-[7px] w-10">
        <svg width="38" height="38" viewBox="0 0 38 38" aria-hidden="true">
          <defs>
            <radialGradient id="orb" cx=".5" cy=".95" r=".9">
              <stop offset="0" stopColor="#4fe0f8" />
              <stop offset=".5" stopColor="#1c6aa4" />
              <stop offset="1" stopColor="#4f84ac" />
            </radialGradient>
          </defs>
          <circle cx="19" cy="19" r="17.500" fill="url(#orb)" stroke="#163f63" />
          <path d="M4 15a16 16 0 0 1 30 0q-15-6-30 0z" fill="#fff" opacity=".25" />
          <path d="M11 11q4-3 8-1l-2 8q-4-2-8 0z" fill="#f0652a" />
          <path d="M20 11q4 2 9-1l-2 8q-5 2-9 0z" fill="#8ccb3a" />
          <path d="M9 19.500q4-2 8 0l-2 8q-4-2-8 0z" fill="#3fa3e8" />
          <path d="M18 20q4 2 9 0l-2 7q-5 3-9 1z" fill="#ffd23c" />
        </svg>
      </button>
      <button aria-label="Internet Explorer" className="ml-[25px] w-9">
        <svg width="34" height="34" viewBox="0 0 34 34" fill="none" aria-hidden="true">
          <path d="M28 18H11.500a5.500 5.500 0 0 0 10.500 3h5.500A12 12 0 1 1 28 18zM12 14.500h10a5 5 0 0 0-10 0z" fill="#35a7ee" stroke="#1263ad" strokeWidth=".8" fillRule="evenodd" />
          <path d="M6 30c-6-2 0-15 9-21S31 1 30 6c0 2-1 4-2 5 1-4-1-5-5-3C13 12 5 23 7 28z" fill="#f5c531" stroke="#c08a10" strokeWidth=".5" />
        </svg>
      </button>
      <button aria-label="Explorer" className="ml-[25px] w-9">
        <svg width="34" height="32" viewBox="0 0 34 32" aria-hidden="true">
          <path d="M3 4q0-2 2-2h8l2 3h14q2 0 2 2v19H3z" fill="#f2d47a" stroke="#b8923a" />
          <path d="M6 5h6M16 7h6M23 9h6" stroke="#fff" strokeWidth="2" />
          <path d="M7 5h3" stroke="#3aa84a" strokeWidth="2" />
          <path d="M17 7h3" stroke="#e84a2a" strokeWidth="2" />
          <path d="M3 11h28v15H3z" fill="#f9e39a" />
          <path d="M8 31V20q0-3 3-3h13q3 0 3 3v11h-5v-8h-9v8z" fill="#9fd8f2" stroke="#4ea0cc" />
        </svg>
      </button>
      <button aria-label="Media Player" className="ml-[26px] w-9">
        <svg width="32" height="30" viewBox="0 0 32 30" aria-hidden="true">
          <rect x="12" y="3" width="17" height="24" fill="#4f94c4" stroke="#9cc8e4" />
          <rect x="8" y="2" width="17" height="25" fill="#6fb4e0" stroke="#b5daf0" />
          <rect x="4" y="2" width="17" height="26" fill="#8fc8ec" stroke="#d2ebfa" />
          <circle cx="14" cy="15" r="9" fill="#f4842a" stroke="#fff" strokeWidth=".8" />
          <path d="M11 10v10l8-5z" fill="#fff" />
        </svg>
      </button>
      <div className="ml-[15px] flex gap-1">
        <TaskButton label="Yandex Browser">
          <svg width="32" height="34" viewBox="0 0 32 34" fill="none" aria-hidden="true">
            <defs>
              <clipPath id="ball"><ellipse cx="16" cy="17" rx="15" ry="16" /></clipPath>
            </defs>
            <ellipse cx="16" cy="17" rx="15" ry="16" fill="#f0f0f0" />
            <g clipPath="url(#ball)">
              <path d="M3 6l11 12v17M31 3Q24 12 14 18" stroke="#e8262a" strokeWidth="7.500" />
            </g>
          </svg>
        </TaskButton>
        <TaskButton label="World of Tanks">
          <svg width="28" height="34" viewBox="0 0 28 34" fill="none" aria-hidden="true">
            <path d="M7 2h14l5 5v14L14 32 2 21V7z" fill="#2c2a26" stroke="#a8a498" strokeWidth="2" />
            <path d="M5 8h18M8 8v10l3 3V12M20 8v10l-3 3V12M14 8v19" stroke="#cfcabb" strokeWidth="1.800" />
          </svg>
        </TaskButton>
        <TaskButton label="Alpari" active>
          <span className="flex h-[34px] w-[30px] flex-col items-center rounded-sm bg-white pt-px text-[10px] leading-[11px] text-[#333]">
            <AlpariMark className="h-5 w-7" />
            alpari
          </span>
        </TaskButton>
        <TaskButton label="Paint">
          <svg width="32" height="34" viewBox="0 0 32 34" fill="none" aria-hidden="true">
            <rect x="2" y="2" width="24" height="31" fill="#fff" stroke="#ccc" />
            <rect x="4" y="4" width="20" height="15" fill="#2358b0" />
            <path d="M4 15q5-6 9-3t11-4v11H4z" fill="#d4e4f4" />
            <path d="M4 20h20v4H4z" fill="#6a7f9c" />
            <path d="M13 25q-6 1-7 5 7 1 10-3z" fill="#222" />
            <path d="M14 26L31 12" stroke="#b03a3a" strokeWidth="2.500" />
          </svg>
        </TaskButton>
      </div>
      <div className="ml-auto flex items-center text-[11px]">
        <span className="pb-1">RU</span>
        <svg width="7" height="4" className="ml-4" aria-hidden="true"><path d="M0 4h7L3.500 0z" fill="#fff" /></svg>
        <svg width="16" height="16" className="ml-[13px]" fill="none" aria-hidden="true">
          <path d="M2.500 2v14" stroke="#fff" strokeWidth="1.500" />
          <path d="M4 3h5v2h5l-1 5H9V8.500H4z" fill="#fff" />
        </svg>
        <svg width="16" height="16" className="ml-2" fill="none" stroke="#fff" aria-hidden="true">
          <path d="M1 6h2l4-4v12L3 10H1z" fill="#fff" />
          <path d="M9 6q1.500 2 0 4M11 4q3 4 0 8M13 3q3.500 5 0 10" />
        </svg>
        <time className="mr-3 ml-4 text-center leading-[17px]">
          15:40
          <br />
          09.12.2014
        </time>
        <button aria-label="Show desktop" className="h-[38px] w-[14px] border border-[#5d656d] bg-linear-to-b from-[#4a5056] to-[#0d1116]" />
      </div>
    </div>
  );
}

export default function App() {
  return (
    <div className="flex min-h-screen flex-col bg-[#f0f0f0] font-['DejaVu_Sans_Condensed','Roboto',sans-serif] text-black">
      <TitleBar />
      <MenuBar />
      <Toolbars />
      <main className="flex flex-1 flex-col bg-[#a8a8a8]">
        <ChartWindow />
      </main>
      <div className="bg-[#f0f0f0]">
        <ChartTabs />
        <AccountStrip />
        <StatusBar />
      </div>
      <Taskbar />
    </div>
  );
}
